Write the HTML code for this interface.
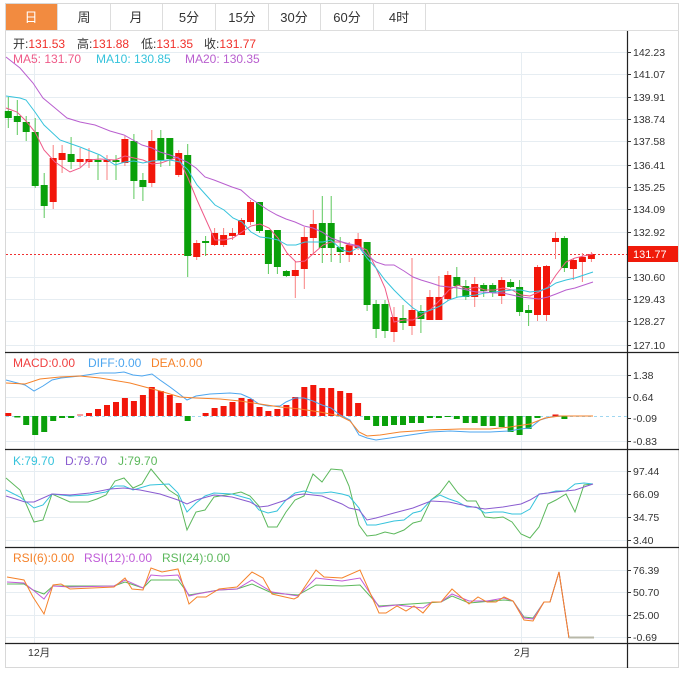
<!DOCTYPE html>
<html><head><meta charset="utf-8"><style>
html,body{margin:0;padding:0;background:#fff;width:684px;height:675px;overflow:hidden}
svg{display:block;font-family:"Liberation Sans","Noto Sans CJK SC",sans-serif}
.ax{font-size:10.5px;fill:#333}
.lb{font-size:12px}
</style></head><body>
<svg width="684" height="675" viewBox="0 0 684 675" xmlns="http://www.w3.org/2000/svg">
<rect x="5.5" y="3.5" width="673" height="664" fill="none" stroke="#d8d8d8"/>
<line x1="5" y1="30.5" x2="679" y2="30.5" stroke="#ddd"/>
<rect x="6" y="4" width="51" height="26" fill="#f28b40"/>
<g stroke="#ddd"><line x1="57.5" y1="4" x2="57.5" y2="30"/><line x1="110.5" y1="4" x2="110.5" y2="30"/><line x1="162.5" y1="4" x2="162.5" y2="30"/><line x1="215.5" y1="4" x2="215.5" y2="30"/><line x1="268.5" y1="4" x2="268.5" y2="30"/><line x1="320.5" y1="4" x2="320.5" y2="30"/><line x1="373.5" y1="4" x2="373.5" y2="30"/><line x1="425.5" y1="4" x2="425.5" y2="30"/></g>
<g font-size="13" text-anchor="middle" fill="#333">
<text x="31" y="22" fill="#fff">日</text><text x="84" y="22">周</text><text x="136" y="22">月</text><text x="189" y="22">5分</text><text x="242" y="22">15分</text><text x="294" y="22">30分</text><text x="347" y="22">60分</text><text x="399" y="22">4时</text>
</g>
<g stroke="#e6edf2" stroke-width="1">
<line x1="6" y1="52.5" x2="627" y2="52.5"/><line x1="6" y1="74.5" x2="627" y2="74.5"/><line x1="6" y1="97.5" x2="627" y2="97.5"/><line x1="6" y1="119.5" x2="627" y2="119.5"/><line x1="6" y1="141.5" x2="627" y2="141.5"/><line x1="6" y1="165.5" x2="627" y2="165.5"/><line x1="6" y1="187.5" x2="627" y2="187.5"/><line x1="6" y1="209.5" x2="627" y2="209.5"/><line x1="6" y1="232.5" x2="627" y2="232.5"/><line x1="6" y1="277.5" x2="627" y2="277.5"/><line x1="6" y1="299.5" x2="627" y2="299.5"/><line x1="6" y1="321.5" x2="627" y2="321.5"/><line x1="6" y1="345.5" x2="627" y2="345.5"/>
<line x1="6" y1="375.5" x2="627" y2="375.5"/><line x1="6" y1="397.5" x2="627" y2="397.5"/><line x1="6" y1="441.5" x2="627" y2="441.5"/>
<line x1="6" y1="471.5" x2="627" y2="471.5"/><line x1="6" y1="494.5" x2="627" y2="494.5"/><line x1="6" y1="517.5" x2="627" y2="517.5"/><line x1="6" y1="540.5" x2="627" y2="540.5"/>
<line x1="6" y1="570.5" x2="627" y2="570.5"/><line x1="6" y1="592.5" x2="627" y2="592.5"/><line x1="6" y1="615.5" x2="627" y2="615.5"/><line x1="6" y1="637.5" x2="627" y2="637.5"/>
<line x1="34.5" y1="52" x2="34.5" y2="644"/><line x1="521.5" y1="52" x2="521.5" y2="644"/>
</g>
<g stroke="#222" stroke-width="1.2">
<line x1="5" y1="352.5" x2="679" y2="352.5"/><line x1="5" y1="449.5" x2="679" y2="449.5"/><line x1="5" y1="547.5" x2="679" y2="547.5"/><line x1="5" y1="643.5" x2="679" y2="643.5"/>
<line x1="627.5" y1="31" x2="627.5" y2="668"/>
</g>
<g class="ax">
<text x="633" y="56">142.23</text><text x="633" y="78">141.07</text><text x="633" y="101">139.91</text><text x="633" y="123">138.74</text><text x="633" y="145">137.58</text><text x="633" y="169">136.41</text><text x="633" y="191">135.25</text><text x="633" y="213">134.09</text><text x="633" y="236">132.92</text><text x="633" y="281">130.60</text><text x="633" y="303">129.43</text><text x="633" y="325">128.27</text><text x="633" y="349">127.10</text>
<text x="633" y="379">1.38</text><text x="633" y="401">0.64</text><text x="633" y="422">-0.09</text><text x="633" y="445">-0.83</text>
<text x="633" y="475">97.44</text><text x="633" y="498">66.09</text><text x="633" y="521">34.75</text><text x="633" y="544">3.40</text>
<text x="633" y="574">76.39</text><text x="633" y="596">50.70</text><text x="633" y="619">25.00</text><text x="633" y="641">-0.69</text>
<text x="28" y="656">12月</text><text x="514" y="656">2月</text>
</g>
<g stroke="#333"><line x1="627" y1="52.5" x2="631" y2="52.5"/><line x1="627" y1="74.5" x2="631" y2="74.5"/><line x1="627" y1="97.5" x2="631" y2="97.5"/><line x1="627" y1="119.5" x2="631" y2="119.5"/><line x1="627" y1="141.5" x2="631" y2="141.5"/><line x1="627" y1="165.5" x2="631" y2="165.5"/><line x1="627" y1="187.5" x2="631" y2="187.5"/><line x1="627" y1="209.5" x2="631" y2="209.5"/><line x1="627" y1="232.5" x2="631" y2="232.5"/><line x1="627" y1="277.5" x2="631" y2="277.5"/><line x1="627" y1="299.5" x2="631" y2="299.5"/><line x1="627" y1="321.5" x2="631" y2="321.5"/><line x1="627" y1="345.5" x2="631" y2="345.5"/>
<line x1="627" y1="375.5" x2="631" y2="375.5"/><line x1="627" y1="397.5" x2="631" y2="397.5"/><line x1="627" y1="418.5" x2="631" y2="418.5"/><line x1="627" y1="441.5" x2="631" y2="441.5"/>
<line x1="627" y1="471.5" x2="631" y2="471.5"/><line x1="627" y1="494.5" x2="631" y2="494.5"/><line x1="627" y1="517.5" x2="631" y2="517.5"/><line x1="627" y1="540.5" x2="631" y2="540.5"/>
<line x1="627" y1="570.5" x2="631" y2="570.5"/><line x1="627" y1="592.5" x2="631" y2="592.5"/><line x1="627" y1="615.5" x2="631" y2="615.5"/><line x1="627" y1="637.5" x2="631" y2="637.5"/></g>
<rect x="628" y="246" width="50" height="16" fill="#f01a0a"/>
<text x="633" y="258" font-size="11" fill="#fff">131.77</text>
<line x1="6" y1="254.5" x2="627" y2="254.5" stroke="#f03030" stroke-dasharray="2,2"/>
<g class="lb">
<text x="13" y="48" fill="#333">开:<tspan fill="#f0302a">131.53</tspan></text>
<text x="77" y="48" fill="#333">高:<tspan fill="#f0302a">131.88</tspan></text>
<text x="141" y="48" fill="#333">低:<tspan fill="#f0302a">131.35</tspan></text>
<text x="204" y="48" fill="#333">收:<tspan fill="#f0302a">131.77</tspan></text>
<text x="13" y="63" fill="#ef5a88">MA5: 131.70</text><text x="96" y="63" fill="#36c3dc">MA10: 130.85</text><text x="185" y="63" fill="#b95fcf">MA20: 130.35</text>
<text x="13" y="367" fill="#f04040">MACD:0.00</text><text x="88" y="367" fill="#4da6ef">DIFF:0.00</text><text x="151" y="367" fill="#f5822a">DEA:0.00</text>
<text x="13" y="465" fill="#36c3dc">K:79.70</text><text x="65" y="465" fill="#8a5cd0">D:79.70</text><text x="118" y="465" fill="#5cb85c">J:79.70</text>
<text x="13" y="562" fill="#f5822a">RSI(6):0.00</text><text x="84" y="562" fill="#c05cd8">RSI(12):0.00</text><text x="162" y="562" fill="#5cb85c">RSI(24):0.00</text>
</g>
<g stroke="#5cc85c" stroke-width="1">
<line x1="8.3" y1="97" x2="8.3" y2="128"/><line x1="17.3" y1="100" x2="17.3" y2="135"/><line x1="26.2" y1="116" x2="26.2" y2="141"/><line x1="35.2" y1="118" x2="35.2" y2="188"/><line x1="44.2" y1="173" x2="44.2" y2="218"/><line x1="71.1" y1="137" x2="71.1" y2="169"/><line x1="98" y1="155" x2="98" y2="180"/><line x1="116" y1="155" x2="116" y2="180"/><line x1="133.9" y1="134" x2="133.9" y2="199"/><line x1="142.9" y1="173" x2="142.9" y2="201"/><line x1="160.8" y1="130" x2="160.8" y2="167"/><line x1="169.8" y1="138" x2="169.8" y2="166"/><line x1="187.7" y1="144" x2="187.7" y2="277"/><line x1="205.6" y1="236" x2="205.6" y2="256"/><line x1="259.5" y1="202" x2="259.5" y2="233"/><line x1="268.4" y1="230" x2="268.4" y2="274"/><line x1="277.4" y1="230" x2="277.4" y2="274"/><line x1="286.4" y1="270" x2="286.4" y2="277"/><line x1="322.3" y1="196" x2="322.3" y2="263"/><line x1="331.2" y1="196" x2="331.2" y2="262"/><line x1="340.2" y1="237" x2="340.2" y2="263"/><line x1="367.1" y1="242" x2="367.1" y2="311"/><line x1="376.1" y1="300" x2="376.1" y2="338"/><line x1="385" y1="300" x2="385" y2="338"/><line x1="403" y1="305" x2="403" y2="330"/><line x1="420.9" y1="305" x2="420.9" y2="333"/><line x1="456.8" y1="267" x2="456.8" y2="297"/><line x1="465.8" y1="280" x2="465.8" y2="300"/><line x1="483.7" y1="283" x2="483.7" y2="297"/><line x1="492.7" y1="283" x2="492.7" y2="297"/><line x1="510.6" y1="279" x2="510.6" y2="288"/><line x1="519.6" y1="280" x2="519.6" y2="316"/><line x1="528.6" y1="305" x2="528.6" y2="326"/><line x1="564.4" y1="236" x2="564.4" y2="272"/>
</g>
<g fill="#0aa00a">
<rect x="4.8" y="111" width="7" height="7"/><rect x="13.8" y="116" width="7" height="6"/><rect x="22.7" y="122" width="7" height="10"/><rect x="31.7" y="132" width="7" height="54"/><rect x="40.7" y="185" width="7" height="21"/><rect x="67.6" y="154" width="7" height="8"/><rect x="94.5" y="160" width="7" height="2"/><rect x="112.5" y="160" width="7" height="2"/><rect x="130.4" y="141" width="7" height="40"/><rect x="139.4" y="180" width="7" height="7"/><rect x="157.3" y="138" width="7" height="22"/><rect x="166.3" y="138" width="7" height="21"/><rect x="184.2" y="155" width="7" height="101"/><rect x="202.1" y="241" width="7" height="2"/><rect x="256" y="202" width="7" height="29"/><rect x="264.9" y="230" width="7" height="34"/><rect x="273.9" y="230" width="7" height="37"/><rect x="282.9" y="271" width="7" height="5"/><rect x="318.8" y="223" width="7" height="25"/><rect x="327.7" y="223" width="7" height="25"/><rect x="336.7" y="247" width="7" height="5"/><rect x="363.6" y="242" width="7" height="63"/><rect x="372.6" y="304" width="7" height="25"/><rect x="381.5" y="304" width="7" height="27"/><rect x="399.5" y="318" width="7" height="5"/><rect x="417.4" y="311" width="7" height="8"/><rect x="453.3" y="277" width="7" height="9"/><rect x="462.3" y="286" width="7" height="11"/><rect x="480.2" y="285" width="7" height="6"/><rect x="489.2" y="285" width="7" height="8"/><rect x="507.1" y="282" width="7" height="5"/><rect x="516.1" y="287" width="7" height="25"/><rect x="525.1" y="310" width="7" height="3"/><rect x="560.9" y="238" width="7" height="30"/>
</g>
<g stroke="#f88080" stroke-width="1">
<line x1="53.2" y1="145" x2="53.2" y2="209"/><line x1="62.1" y1="145" x2="62.1" y2="173"/><line x1="80.1" y1="148" x2="80.1" y2="167"/><line x1="89" y1="148" x2="89" y2="168"/><line x1="107" y1="155" x2="107" y2="180"/><line x1="124.9" y1="136" x2="124.9" y2="166"/><line x1="151.8" y1="130" x2="151.8" y2="187"/><line x1="178.7" y1="150" x2="178.7" y2="177"/><line x1="196.7" y1="240" x2="196.7" y2="260"/><line x1="214.6" y1="228" x2="214.6" y2="246"/><line x1="223.6" y1="228" x2="223.6" y2="247"/><line x1="232.5" y1="228" x2="232.5" y2="240"/><line x1="241.5" y1="218" x2="241.5" y2="235"/><line x1="250.5" y1="200" x2="250.5" y2="225"/><line x1="295.3" y1="261" x2="295.3" y2="298"/><line x1="304.3" y1="227" x2="304.3" y2="289"/><line x1="313.3" y1="210" x2="313.3" y2="255"/><line x1="349.2" y1="242" x2="349.2" y2="262"/><line x1="358.1" y1="233" x2="358.1" y2="250"/><line x1="394" y1="307" x2="394" y2="342"/><line x1="412" y1="258" x2="412" y2="335"/><line x1="429.9" y1="290" x2="429.9" y2="320"/><line x1="438.9" y1="276" x2="438.9" y2="320"/><line x1="447.8" y1="271" x2="447.8" y2="301"/><line x1="474.7" y1="277" x2="474.7" y2="307"/><line x1="501.7" y1="277" x2="501.7" y2="304"/><line x1="537.5" y1="265" x2="537.5" y2="321"/><line x1="546.5" y1="265" x2="546.5" y2="321"/><line x1="555.5" y1="232" x2="555.5" y2="259"/><line x1="573.4" y1="258" x2="573.4" y2="280"/><line x1="582.4" y1="253" x2="582.4" y2="282"/><line x1="591.4" y1="252" x2="591.4" y2="262"/>
</g>
<g fill="#f2160a">
<rect x="49.7" y="158" width="7" height="44"/><rect x="58.6" y="153" width="7" height="7"/><rect x="76.6" y="159" width="7" height="3"/><rect x="85.5" y="159" width="7" height="3"/><rect x="103.5" y="160" width="7" height="2"/><rect x="121.4" y="139" width="7" height="24"/><rect x="148.3" y="141" width="7" height="42"/><rect x="175.2" y="153" width="7" height="22"/><rect x="193.2" y="243" width="7" height="14"/><rect x="211.1" y="233" width="7" height="12"/><rect x="220.1" y="235" width="7" height="10"/><rect x="229" y="233" width="7" height="3"/><rect x="238" y="220" width="7" height="15"/><rect x="247" y="202" width="7" height="20"/><rect x="291.8" y="270" width="7" height="6"/><rect x="300.8" y="237" width="7" height="32"/><rect x="309.8" y="224" width="7" height="14"/><rect x="345.7" y="245" width="7" height="10"/><rect x="354.6" y="239" width="7" height="9"/><rect x="390.5" y="317" width="7" height="15"/><rect x="408.5" y="310" width="7" height="16"/><rect x="426.4" y="297" width="7" height="23"/><rect x="435.4" y="297" width="7" height="23"/><rect x="444.3" y="275" width="7" height="24"/><rect x="471.2" y="284" width="7" height="13"/><rect x="498.2" y="280" width="7" height="16"/><rect x="534" y="267" width="7" height="48"/><rect x="543" y="266" width="7" height="49"/><rect x="552" y="238" width="7" height="4"/><rect x="569.9" y="260" width="7" height="9"/><rect x="578.9" y="257" width="7" height="5"/><rect x="587.9" y="254" width="7" height="5"/>
</g>
<g fill="none" stroke-width="1">
<polyline stroke="#ef5a88" points="6,108 17,112 26,121 35,132 44,150 55,162 70,172 80,168 89,160 100,159 115,160 125,156 134,158 143,160 152,164 161,163 178,157 188,178 197,200 206,220 215,240 224,240 233,238 242,232 251,226 260,224 269,228 278,238 287,253 296,262 305,261 314,253 323,245 331,242 342,242 349,245 360,247 367,250 376,268 385,288 394,322 404,320 413,320 421,316 431,309 440,300 449,290 458,285 467,289 476,287 485,290 494,290 503,288 512,290 521,295 530,296 539,292 548,287 556,275 566,262 575,258 584,256 593,254"/>
<polyline stroke="#36c3dc" points="6,96 20,98 26,100 35,112 44,125 60,140 80,147 100,155 115,165 125,162 134,161 143,163 152,161 170,160 180,162 188,170 197,185 206,195 215,205 224,210 233,218 242,222 251,232 260,237 269,238 278,240 287,245 296,245 305,242 314,242 323,242 331,240 342,250 350,252 359,247 367,258 376,268 385,280 394,290 404,300 413,308 421,313 431,310 440,306 449,300 458,297 467,296 476,295 485,293 494,292 503,291 512,290 521,290 530,292 539,291 548,288 556,283 566,280 575,278 584,275 593,272"/>
<polyline stroke="#b95fcf" points="6,57 20,68 33,83 43,98 55,108 67,118 80,122 95,125 110,131 124,135 133,140 142,145 152,148 160,152 170,155 178,158 187,162 196,168 205,177 214,180 232,187 241,190 250,198 259,204 268,210 277,215 286,219 295,222 304,226 313,228 322,232 331,238 342,242 350,244 359,246 367,255 376,262 385,265 394,265 404,271 413,277 421,280 431,283 440,286 449,287 458,288 467,290 476,292 485,292 494,293 503,293 512,295 521,297 530,298 539,299 548,297 556,294 566,290 575,288 584,285 593,282"/>
</g>
<line x1="6" y1="416.5" x2="627" y2="416.5" stroke="#9fd6f0" stroke-dasharray="3,3"/>
<g fill="#f2160a">
<rect x="5.3" y="413" width="6" height="3"/><rect x="86" y="413" width="6" height="3"/><rect x="95" y="409" width="6" height="7"/><rect x="104" y="405" width="6" height="11"/><rect x="113" y="402" width="6" height="14"/><rect x="121.9" y="398" width="6" height="18"/><rect x="130.9" y="401" width="6" height="15"/><rect x="139.9" y="395" width="6" height="21"/><rect x="148.8" y="387" width="6" height="29"/><rect x="157.8" y="391" width="6" height="25"/><rect x="166.8" y="395" width="6" height="21"/><rect x="175.7" y="403" width="6" height="13"/><rect x="202.6" y="413" width="6" height="3"/><rect x="211.6" y="408" width="6" height="8"/><rect x="220.6" y="406" width="6" height="10"/><rect x="229.5" y="402" width="6" height="14"/><rect x="238.5" y="398" width="6" height="18"/><rect x="247.5" y="399" width="6" height="17"/><rect x="256.5" y="407" width="6" height="9"/><rect x="265.4" y="411" width="6" height="5"/><rect x="274.4" y="409" width="6" height="7"/><rect x="283.4" y="405" width="6" height="11"/><rect x="292.3" y="397" width="6" height="19"/><rect x="301.3" y="387" width="6" height="29"/><rect x="310.3" y="385" width="6" height="31"/><rect x="319.3" y="388" width="6" height="28"/><rect x="328.2" y="388" width="6" height="28"/><rect x="337.2" y="391" width="6" height="25"/><rect x="346.2" y="393" width="6" height="23"/><rect x="355.1" y="403" width="6" height="13"/><rect x="552.5" y="414.5" width="6" height="2"/>
</g>
<rect x="77.1" y="414" width="6" height="2" fill="#f7a0a0"/>
<g fill="#0aa00a">
<rect x="14.3" y="416" width="6" height="1.5"/><rect x="23.2" y="416" width="6" height="9"/><rect x="32.2" y="416" width="6" height="19"/><rect x="41.2" y="416" width="6" height="16"/><rect x="50.2" y="416" width="6" height="5"/><rect x="59.1" y="416" width="6" height="2"/><rect x="68.1" y="416" width="6" height="2"/><rect x="184.7" y="416" width="6" height="5"/><rect x="364.1" y="416" width="6" height="4"/><rect x="373.1" y="416" width="6" height="10"/><rect x="382" y="416" width="6" height="10"/><rect x="391" y="416" width="6" height="9"/><rect x="400" y="416" width="6" height="9"/><rect x="409" y="416" width="6" height="7"/><rect x="417.9" y="416" width="6" height="7"/><rect x="426.9" y="416" width="6" height="2"/><rect x="435.9" y="416" width="6" height="2"/><rect x="444.8" y="416" width="6" height="1"/><rect x="453.8" y="416" width="6" height="3"/><rect x="462.8" y="416" width="6" height="7"/><rect x="471.7" y="416" width="6" height="7"/><rect x="480.7" y="416" width="6" height="10"/><rect x="489.7" y="416" width="6" height="10"/><rect x="498.7" y="416" width="6" height="11"/><rect x="507.6" y="416" width="6" height="16"/><rect x="516.6" y="416" width="6" height="19"/><rect x="525.6" y="416" width="6" height="13"/><rect x="534.5" y="416" width="6" height="2"/><rect x="561.4" y="416" width="6" height="3"/>
</g>
<g fill="none" stroke-width="1">
<polyline stroke="#4da6ef" points="6,380 25,385 34,391 43,386 52,380 61,378 80,376 100,373 115,373 124,372 133,375 142,376 152,374 160,380 170,387 178,393 187,400 196,396 210,394 230,393 241,394 250,398 259,404 268,406 280,406 286,402 295,398 304,398 313,401 322,405 331,408 340,415 350,420 359,435 367,438 376,440 390,438 410,435 430,432 450,431 470,432 490,432 510,431 520,429 530,428 540,420 550,417 560,416 593,416"/>
<polyline stroke="#f5822a" points="6,383 25,384 40,379 60,377 80,376 100,378 130,383 160,391 180,397 196,398 220,399 240,401 260,404 280,407 300,409 320,412 340,416 350,421 359,432 367,436 380,435 400,432 430,430 460,429 490,429 510,427 530,424 545,418 560,416 593,416"/>
</g>
<g fill="none" stroke-width="1">
<polyline stroke="#5cb85c" points="6,478 20,490 34,522 43,520 52,494 70,502 88,502 97,499 106,495 115,481 124,478 133,488 142,484 151,469 160,480 169,490 178,496 187,530 196,512 205,510 214,497 232,494 241,492 250,496 259,506 268,527 277,527 286,512 295,500 304,496 313,474 322,482 331,469 342,470 349,486 359,525 367,536 376,535 385,532 394,534 404,530 413,523 421,521 431,500 440,493 449,481 458,493 467,501 476,501 485,517 494,518 503,517 512,522 521,534 530,538 539,527 548,504 556,500 566,494 575,512 584,485 593,484"/>
<polyline stroke="#36c3dc" points="6,490 20,497 34,508 43,505 52,494 70,496 88,495 106,492 115,486 124,486 133,490 150,485 169,484 178,493 187,512 196,503 205,496 214,493 232,494 250,499 259,510 268,513 277,511 286,500 295,493 304,491 313,493 322,493 331,492 342,494 349,496 359,508 367,525 376,525 385,523 394,521 404,520 413,513 421,511 431,500 440,495 449,499 458,502 467,507 476,507 485,513 494,512 503,512 512,514 521,514 530,509 539,494 548,493 556,491 566,491 575,484 584,483 593,484"/>
<polyline stroke="#8a5cd0" points="6,496 25,502 34,502 52,494 70,495 90,493 110,489 124,488 140,490 160,494 178,500 187,504 196,500 214,495 232,497 250,502 259,507 268,506 286,500 295,495 304,494 322,496 342,504 349,508 359,510 367,520 376,518 394,513 413,508 431,501 449,502 467,506 485,509 503,507 521,504 530,500 540,494 556,492 575,490 593,484"/>
</g>
<g fill="none" stroke-width="1">
<polyline stroke="#5cb85c" points="7,584 24,584 33,590 44,594 53,586 114,586 125,582 143,588 151,580 178,580 189,595 219,590 237,589 252,584 272,593 298,595 316,585 342,586 360,585 379,606 441,602 452,596 469,603 504,600 513,601 524,617 533,618 544,602 550,602 559,572 569,638"/>
<polyline stroke="#c05cd8" points="7,582 24,583 33,590 44,599 53,586 70,587 114,586 125,580 143,588 151,575 162,576 178,575 189,596 197,594 219,590 237,589 252,580 272,592 298,596 316,578 342,581 360,578 379,607 397,605 423,608 432,602 441,602 452,594 469,601 487,601 504,598 513,601 524,618 533,619 544,602 550,602 559,572 569,638"/>
<polyline stroke="#f5822a" points="7,577 24,580 33,597 44,614 53,585 61,584 70,589 114,587 125,578 132,589 143,590 151,568 162,572 178,569 189,604 197,597 206,597 219,589 237,587 252,572 263,578 272,594 285,597 294,599 298,597 316,570 324,577 342,578 360,570 379,613 386,613 397,606 406,611 414,606 423,613 432,602 441,602 452,589 460,596 469,604 478,597 487,602 496,602 504,597 513,601 524,620 533,621 544,602 550,602 559,572 569,638"/>
<line x1="569" y1="637.5" x2="594" y2="637.5" stroke="#b8b8a8" stroke-width="2"/>
</g>
</svg>
</body></html>
